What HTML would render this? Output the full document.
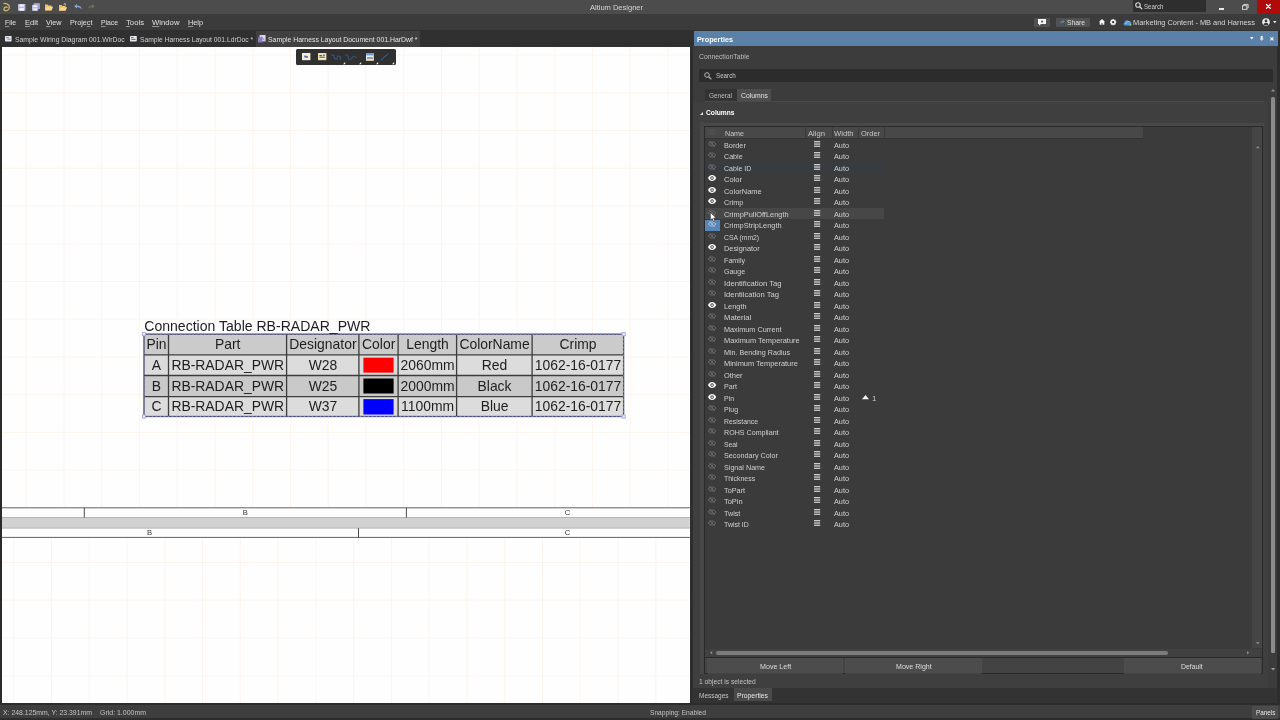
<!DOCTYPE html>
<html lang="en"><head><meta charset="utf-8"><title>Altium Designer</title>
<style>

html,body{margin:0;padding:0;}
body{width:1280px;height:720px;overflow:hidden;position:relative;background:#3b3b3b;font-family:"Liberation Sans",sans-serif;}
#root{position:absolute;left:0;top:0;width:1280px;height:720px;will-change:transform;}
.b{position:absolute;}
.t{position:absolute;white-space:pre;line-height:10px;height:10px;transform-origin:0 0;}
.t u{text-decoration:underline;text-underline-offset:0.6px;text-decoration-thickness:0.6px;text-decoration-color:rgba(224,224,224,0.55);}
svg{position:absolute;overflow:visible;}
.ct{position:absolute;white-space:pre;color:#1e1e1e;font-size:13.9px;line-height:16px;height:16px;text-align:center;}
.sl{position:absolute;white-space:pre;color:#333333;font-size:7.6px;line-height:8px;height:8px;width:10px;text-align:center;}

</style></head>
<body>
<div id="root">
<div class="b" style="left:0px;top:0px;width:1280.00px;height:13.80px;background:#4c4c4c;"></div>
<div class="b" style="left:0px;top:13.8px;width:1280.00px;height:16.20px;background:#3b3b3b;"></div>
<div class="b" style="left:0px;top:30px;width:1280.00px;height:16.50px;background:#303030;"></div>
<div class="b" style="left:1132.5px;top:0px;width:73.80px;height:11.60px;background:#2e2e2e;border-radius:0 0 1.5px 1.5px;"></div>
<div class="b" style="left:1257px;top:0px;width:23.00px;height:14.00px;background:#b00b0b;"></div>
<div class="b" style="left:1034px;top:18px;width:16.20px;height:8.60px;background:#515151;border-radius:1px;"></div>
<div class="b" style="left:1055.5px;top:18px;width:34.50px;height:8.60px;background:#515151;border-radius:1px;"></div>
<div class="b" style="left:256px;top:30.5px;width:164.00px;height:16.00px;background:#404040;"></div>
<div class="b" style="left:0px;top:46.5px;width:2.20px;height:656.50px;background:#2b2b2b;"></div>
<div class="b" style="left:690px;top:46.5px;width:2.70px;height:656.50px;background:#2e2e2e;"></div>
<div class="b" style="left:0px;top:702.5px;width:1280.00px;height:2.10px;background:#2c2c2c;"></div>
<div class="b" style="left:0px;top:704.6px;width:1280.00px;height:15.40px;background:#3e3e3e;"></div>
<div class="b" style="left:0px;top:718.4px;width:1280.00px;height:1.60px;background:#2c2c2c;"></div>
<div class="b" style="left:1252.5px;top:707.3px;width:24.70px;height:10.30px;background:#4b4b4b;box-shadow:0 0 0 0.6px #5a5a5a;"></div>
<div class="b" style="left:692.7px;top:46px;width:587.30px;height:642.00px;background:#3c3c3c;"></div>
<div class="b" style="left:1277.3px;top:30.5px;width:2.70px;height:672.50px;background:#2d2d2d;"></div>
<div class="b" style="left:694px;top:31px;width:583.60px;height:15.00px;background:#5c81a9;"></div>
<div class="b" style="left:698.7px;top:68.6px;width:574.30px;height:13.40px;background:#2c2c2c;border-radius:1.5px;"></div>
<div class="b" style="left:704.5px;top:88.7px;width:32.90px;height:12.70px;background:#333333;"></div>
<div class="b" style="left:737.4px;top:88.7px;width:33.90px;height:12.70px;background:#4e4e4e;"></div>
<div class="b" style="left:704.5px;top:101.4px;width:559.50px;height:0.80px;background:#4a4a4a;"></div>
<div class="b" style="left:692.7px;top:102.2px;width:575.30px;height:585.80px;background:#3f3f3f;"></div>
<div class="b" style="left:699.8px;top:121.5px;width:3.80px;height:552.10px;background:#474747;"></div>
<div class="b" style="left:703.6px;top:122.8px;width:560.20px;height:2.80px;background:#484848;"></div>
<div class="b" style="left:703.6px;top:125.6px;width:559.00px;height:548.40px;background:#2a2a2a;"></div>
<div class="b" style="left:704.6px;top:126.6px;width:557.40px;height:530.10px;background:#3b3b3b;"></div>
<div class="b" style="left:704.6px;top:126.6px;width:438.40px;height:11.40px;background:#484848;"></div>
<div class="b" style="left:804.6px;top:127px;width:0.80px;height:11.00px;background:#3a3a3a;"></div>
<div class="b" style="left:831.8px;top:127px;width:0.80px;height:11.00px;background:#3a3a3a;"></div>
<div class="b" style="left:858.4px;top:127px;width:0.80px;height:11.00px;background:#3a3a3a;"></div>
<div class="b" style="left:883.7px;top:127px;width:0.80px;height:11.00px;background:#3a3a3a;"></div>
<div class="b" style="left:704.6px;top:138px;width:438.40px;height:0.70px;background:#343434;"></div>
<div class="b" style="left:1252.2px;top:126.6px;width:9.80px;height:521.40px;background:#454545;"></div>
<div class="b" style="left:704.6px;top:162.4px;width:179.40px;height:11.20px;background:#383c41;"></div>
<div class="b" style="left:705.4px;top:208.4px;width:178.60px;height:11.00px;background:#474747;"></div>
<div class="b" style="left:705.4px;top:219.9px;width:14.60px;height:10.80px;background:#5885b8;"></div>
<div class="b" style="left:704.6px;top:648.5px;width:557.40px;height:8.20px;background:#414141;"></div>
<div class="b" style="left:716px;top:651px;width:451.50px;height:4.00px;background:#7c7c7c;border-radius:2px;"></div>
<div class="b" style="left:704.6px;top:657.8px;width:557.40px;height:15.60px;background:#434343;"></div>
<div class="b" style="left:707.5px;top:659.2px;width:134.30px;height:13.40px;background:#4c4c4c;box-shadow:0 0 0 0.6px #565656;"></div>
<div class="b" style="left:846.2px;top:659.2px;width:135.10px;height:13.40px;background:#4c4c4c;box-shadow:0 0 0 0.6px #565656;"></div>
<div class="b" style="left:1125px;top:659.2px;width:135.00px;height:13.40px;background:#4c4c4c;box-shadow:0 0 0 0.6px #565656;"></div>
<div class="b" style="left:1270.8px;top:96.5px;width:3.80px;height:556.00px;background:#8a8a8a;border-radius:1.5px;"></div>
<div class="b" style="left:692.7px;top:688px;width:584.60px;height:14.50px;background:#333333;"></div>
<div class="b" style="left:733.6px;top:688.2px;width:38.00px;height:13.00px;background:#4a4a4a;"></div>
<div class="b" style="left:2.2px;top:46.5px;width:687.80px;height:656.00px;background:#fefefe;overflow:hidden;">
<svg style="left:0;top:0" width="687.80" height="656.00" viewBox="2.2 46.5 687.80 656.00">
<line x1="26.40" y1="46" x2="26.40" y2="507" stroke="#fcf5ef" stroke-width="1"/>
<line x1="64.15" y1="46" x2="64.15" y2="507" stroke="#fcf5ef" stroke-width="1"/>
<line x1="101.90" y1="46" x2="101.90" y2="507" stroke="#fcf5ef" stroke-width="1"/>
<line x1="139.65" y1="46" x2="139.65" y2="507" stroke="#fcf5ef" stroke-width="1"/>
<line x1="177.40" y1="46" x2="177.40" y2="507" stroke="#fcf5ef" stroke-width="1"/>
<line x1="215.15" y1="46" x2="215.15" y2="507" stroke="#fcf5ef" stroke-width="1"/>
<line x1="252.90" y1="46" x2="252.90" y2="507" stroke="#fcf5ef" stroke-width="1"/>
<line x1="290.65" y1="46" x2="290.65" y2="507" stroke="#fcf5ef" stroke-width="1"/>
<line x1="328.40" y1="46" x2="328.40" y2="507" stroke="#fcf5ef" stroke-width="1"/>
<line x1="366.15" y1="46" x2="366.15" y2="507" stroke="#fcf5ef" stroke-width="1"/>
<line x1="403.90" y1="46" x2="403.90" y2="507" stroke="#fcf5ef" stroke-width="1"/>
<line x1="441.65" y1="46" x2="441.65" y2="507" stroke="#fcf5ef" stroke-width="1"/>
<line x1="479.40" y1="46" x2="479.40" y2="507" stroke="#fcf5ef" stroke-width="1"/>
<line x1="517.15" y1="46" x2="517.15" y2="507" stroke="#fcf5ef" stroke-width="1"/>
<line x1="554.90" y1="46" x2="554.90" y2="507" stroke="#fcf5ef" stroke-width="1"/>
<line x1="592.65" y1="46" x2="592.65" y2="507" stroke="#fcf5ef" stroke-width="1"/>
<line x1="630.40" y1="46" x2="630.40" y2="507" stroke="#fcf5ef" stroke-width="1"/>
<line x1="668.15" y1="46" x2="668.15" y2="507" stroke="#fcf5ef" stroke-width="1"/>
<line x1="2" y1="54.60" x2="690" y2="54.60" stroke="#fcf5ef" stroke-width="1"/>
<line x1="2" y1="92.33" x2="690" y2="92.33" stroke="#fcf5ef" stroke-width="1"/>
<line x1="2" y1="130.06" x2="690" y2="130.06" stroke="#fcf5ef" stroke-width="1"/>
<line x1="2" y1="167.79" x2="690" y2="167.79" stroke="#fcf5ef" stroke-width="1"/>
<line x1="2" y1="205.52" x2="690" y2="205.52" stroke="#fcf5ef" stroke-width="1"/>
<line x1="2" y1="243.25" x2="690" y2="243.25" stroke="#fcf5ef" stroke-width="1"/>
<line x1="2" y1="280.98" x2="690" y2="280.98" stroke="#fcf5ef" stroke-width="1"/>
<line x1="2" y1="318.71" x2="690" y2="318.71" stroke="#fcf5ef" stroke-width="1"/>
<line x1="2" y1="356.44" x2="690" y2="356.44" stroke="#fcf5ef" stroke-width="1"/>
<line x1="2" y1="394.17" x2="690" y2="394.17" stroke="#fcf5ef" stroke-width="1"/>
<line x1="2" y1="431.90" x2="690" y2="431.90" stroke="#fcf5ef" stroke-width="1"/>
<line x1="2" y1="469.63" x2="690" y2="469.63" stroke="#fcf5ef" stroke-width="1"/>
<line x1="13.90" y1="537" x2="13.90" y2="704" stroke="#fcf5ef" stroke-width="1"/>
<line x1="51.67" y1="537" x2="51.67" y2="704" stroke="#fcf5ef" stroke-width="1"/>
<line x1="89.44" y1="537" x2="89.44" y2="704" stroke="#fcf5ef" stroke-width="1"/>
<line x1="127.21" y1="537" x2="127.21" y2="704" stroke="#fcf5ef" stroke-width="1"/>
<line x1="164.98" y1="537" x2="164.98" y2="704" stroke="#fcf5ef" stroke-width="1"/>
<line x1="202.75" y1="537" x2="202.75" y2="704" stroke="#fcf5ef" stroke-width="1"/>
<line x1="240.52" y1="537" x2="240.52" y2="704" stroke="#fcf5ef" stroke-width="1"/>
<line x1="278.29" y1="537" x2="278.29" y2="704" stroke="#fcf5ef" stroke-width="1"/>
<line x1="316.06" y1="537" x2="316.06" y2="704" stroke="#fcf5ef" stroke-width="1"/>
<line x1="353.83" y1="537" x2="353.83" y2="704" stroke="#fcf5ef" stroke-width="1"/>
<line x1="391.60" y1="537" x2="391.60" y2="704" stroke="#fcf5ef" stroke-width="1"/>
<line x1="429.37" y1="537" x2="429.37" y2="704" stroke="#fcf5ef" stroke-width="1"/>
<line x1="467.14" y1="537" x2="467.14" y2="704" stroke="#fcf5ef" stroke-width="1"/>
<line x1="504.91" y1="537" x2="504.91" y2="704" stroke="#fcf5ef" stroke-width="1"/>
<line x1="542.68" y1="537" x2="542.68" y2="704" stroke="#fcf5ef" stroke-width="1"/>
<line x1="580.45" y1="537" x2="580.45" y2="704" stroke="#fcf5ef" stroke-width="1"/>
<line x1="618.22" y1="537" x2="618.22" y2="704" stroke="#fcf5ef" stroke-width="1"/>
<line x1="655.99" y1="537" x2="655.99" y2="704" stroke="#fcf5ef" stroke-width="1"/>
<line x1="2" y1="562" x2="690" y2="562" stroke="#fcf5ef" stroke-width="1"/>
<line x1="2" y1="599.7" x2="690" y2="599.7" stroke="#fcf5ef" stroke-width="1"/>
<line x1="2" y1="637.5" x2="690" y2="637.5" stroke="#fcf5ef" stroke-width="1"/>
<line x1="2" y1="675.3" x2="690" y2="675.3" stroke="#fcf5ef" stroke-width="1"/>
<rect x="2" y="507.3" width="688" height="29.6" fill="#ffffff"/>
<rect x="2" y="517" width="688" height="10.6" fill="#d2d2d2"/>
<line x1="2" y1="507.3" x2="690" y2="507.3" stroke="#5e5e5e" stroke-width="1"/>
<line x1="2" y1="517.0" x2="690" y2="517.0" stroke="#b4b4b4" stroke-width="1"/>
<line x1="2" y1="527.6" x2="690" y2="527.6" stroke="#b4b4b4" stroke-width="1"/>
<line x1="2" y1="536.9" x2="690" y2="536.9" stroke="#5e5e5e" stroke-width="1"/>
<line x1="84.5" y1="507.3" x2="84.5" y2="517" stroke="#4a4a4a" stroke-width="1"/>
<line x1="406.6" y1="507.3" x2="406.6" y2="517" stroke="#4a4a4a" stroke-width="1"/>
<line x1="358.7" y1="527.6" x2="358.7" y2="536.9" stroke="#4a4a4a" stroke-width="1"/>
<rect x="144.2" y="333.7" width="479.60" height="20.60" fill="#cbcbcb"/>
<rect x="144.2" y="354.3" width="479.60" height="20.70" fill="#dcdcdc"/>
<rect x="144.2" y="375.0" width="479.60" height="21.20" fill="#c9c9c9"/>
<rect x="144.2" y="396.2" width="479.60" height="19.80" fill="#dcdcdc"/>
<line x1="168.7" y1="333.7" x2="168.7" y2="416.0" stroke="#3c3c3c" stroke-width="1.3"/>
<line x1="286.8" y1="333.7" x2="286.8" y2="416.0" stroke="#3c3c3c" stroke-width="1.3"/>
<line x1="359.1" y1="333.7" x2="359.1" y2="416.0" stroke="#3c3c3c" stroke-width="1.3"/>
<line x1="398.3" y1="333.7" x2="398.3" y2="416.0" stroke="#3c3c3c" stroke-width="1.3"/>
<line x1="456.8" y1="333.7" x2="456.8" y2="416.0" stroke="#3c3c3c" stroke-width="1.3"/>
<line x1="532.3" y1="333.7" x2="532.3" y2="416.0" stroke="#3c3c3c" stroke-width="1.3"/>
<line x1="144.2" y1="354.3" x2="623.8" y2="354.3" stroke="#3c3c3c" stroke-width="1.3"/>
<line x1="144.2" y1="375.0" x2="623.8" y2="375.0" stroke="#3c3c3c" stroke-width="1.3"/>
<line x1="144.2" y1="396.2" x2="623.8" y2="396.2" stroke="#3c3c3c" stroke-width="1.3"/>
<rect x="144.2" y="333.7" width="479.60" height="82.30" fill="none" stroke="#4a4a5a" stroke-width="1.3"/>
<rect x="144.2" y="333.7" width="479.60" height="82.30" fill="none" stroke="#7d7dc8" stroke-width="1" stroke-dasharray="2 2"/>
<rect x="142.6" y="332.09999999999997" width="3.2" height="3.2" fill="#e8e8ff" stroke="#9aa0e0" stroke-width="0.8"/>
<rect x="622.1999999999999" y="332.09999999999997" width="3.2" height="3.2" fill="#e8e8ff" stroke="#9aa0e0" stroke-width="0.8"/>
<rect x="142.6" y="414.4" width="3.2" height="3.2" fill="#e8e8ff" stroke="#9aa0e0" stroke-width="0.8"/>
<rect x="622.1999999999999" y="414.4" width="3.2" height="3.2" fill="#e8e8ff" stroke="#9aa0e0" stroke-width="0.8"/>
<rect x="363.6" y="357.2" width="30.2" height="14.90" fill="#ff0000"/>
<rect x="363.6" y="378.0" width="30.2" height="15.00" fill="#000000"/>
<rect x="363.6" y="398.6" width="30.2" height="15.40" fill="#0000ff"/>
</svg>
<span class="ct" style="left:142.10px;top:271.50px;text-align:left;font-size:14.05px">Connection Table RB-RADAR_PWR</span>
<span class="ct" style="left:142.00px;width:24.50px;top:289.50px">Pin</span>
<span class="ct" style="left:166.50px;width:118.10px;top:289.50px">Part</span>
<span class="ct" style="left:284.60px;width:72.30px;top:289.50px">Designator</span>
<span class="ct" style="left:356.90px;width:39.20px;top:289.50px">Color</span>
<span class="ct" style="left:396.10px;width:58.50px;top:289.50px">Length</span>
<span class="ct" style="left:454.60px;width:75.50px;top:289.50px">ColorName</span>
<span class="ct" style="left:530.10px;width:91.50px;top:289.50px">Crimp</span>
<span class="ct" style="left:142.00px;width:24.50px;top:310.50px">A</span>
<span class="ct" style="left:166.50px;width:118.10px;top:310.50px">RB-RADAR_PWR</span>
<span class="ct" style="left:284.60px;width:72.30px;top:310.50px">W28</span>
<span class="ct" style="left:396.10px;width:58.50px;top:310.50px">2060mm</span>
<span class="ct" style="left:454.60px;width:75.50px;top:310.50px">Red</span>
<span class="ct" style="left:530.10px;width:91.50px;top:310.50px">1062-16-0177</span>
<span class="ct" style="left:142.00px;width:24.50px;top:331.50px">B</span>
<span class="ct" style="left:166.50px;width:118.10px;top:331.50px">RB-RADAR_PWR</span>
<span class="ct" style="left:284.60px;width:72.30px;top:331.50px">W25</span>
<span class="ct" style="left:396.10px;width:58.50px;top:331.50px">2000mm</span>
<span class="ct" style="left:454.60px;width:75.50px;top:331.50px">Black</span>
<span class="ct" style="left:530.10px;width:91.50px;top:331.50px">1062-16-0177</span>
<span class="ct" style="left:142.00px;width:24.50px;top:351.50px">C</span>
<span class="ct" style="left:166.50px;width:118.10px;top:351.50px">RB-RADAR_PWR</span>
<span class="ct" style="left:284.60px;width:72.30px;top:351.50px">W37</span>
<span class="ct" style="left:396.10px;width:58.50px;top:351.50px">1100mm</span>
<span class="ct" style="left:454.60px;width:75.50px;top:351.50px">Blue</span>
<span class="ct" style="left:530.10px;width:91.50px;top:351.50px">1062-16-0177</span>
<span class="sl" style="left:238.10px;top:462.50px">B</span>
<span class="sl" style="left:560.20px;top:462.50px">C</span>
<span class="sl" style="left:142.40px;top:482.50px">B</span>
<span class="sl" style="left:560.20px;top:482.50px">C</span>
<div class="b" style="left:293.60px;top:2.40px;width:100.6px;height:15.8px;background:#303030;border-radius:1.6px;"></div>
</div>
<svg style="left:3.4px;top:1.9px" width="7.2" height="9.5" viewBox="0 0 8 10.5"><path d="M1 1.4 L4 1.8 L6.8 3.9 L6.8 7.4 Q5.6 9.7 3 9.7 Q0.9 9.5 1 7.7 Q1.3 5.7 3.2 5.5 L4.7 5.9" fill="none" stroke="#cbb567" stroke-width="1.45" stroke-linecap="round" stroke-linejoin="round"/></svg>
<svg style="left:18px;top:3.6px" width="7.4" height="6.8" viewBox="0 0 7.4 6.8"><rect x="0" y="0" width="7.4" height="6.8" rx="0.6" fill="#b9b9dc"/><rect x="1.6" y="0.4" width="4.2" height="2.2" fill="#f2f2fa"/><rect x="1.4" y="4" width="4.6" height="2.8" fill="#eeeef8"/></svg>
<svg style="left:31.6px;top:2.8px" width="8" height="7.8" viewBox="0 0 8 7.8"><rect x="1.8" y="0" width="6.2" height="6" rx="0.5" fill="#9d9dc8"/><rect x="0" y="1.8" width="6.2" height="6" rx="0.5" fill="#bcbcdf"/><rect x="1.2" y="2.2" width="3.6" height="1.8" fill="#eeeef8"/><rect x="1.2" y="5.2" width="3.8" height="2.4" fill="#e6e6f4"/></svg>
<svg style="left:45.4px;top:4px" width="8" height="6.6" viewBox="0 0 8 6.6"><path d="M0 6.4 L0 0.6 L2.6 0.6 L3.4 1.6 L6.6 1.6 L6.6 2.8 L8 2.8 L6.6 6.4 Z" fill="#e9c46a"/><path d="M0.2 6.2 L1.6 3 L7.8 3 L6.4 6.2 Z" fill="#f3d78c"/></svg>
<svg style="left:59.2px;top:2.6px" width="8.2" height="8" viewBox="0 0 8.2 8"><path d="M0 7.8 L0 2 L2.6 2 L3.4 3 L6.6 3 L6.6 4.2 L8 4.2 L6.6 7.8 Z" fill="#e6c069"/><path d="M0.2 7.6 L1.6 4.4 L7.8 4.4 L6.4 7.6 Z" fill="#f1d791"/><path d="M4.6 1.8 L6.2 0.4 L6.4 2.4" fill="none" stroke="#ddd" stroke-width="0.8"/></svg>
<svg style="left:73.6px;top:4px" width="8" height="5.6" viewBox="0 0 8 5.6"><path d="M0.2 2.2 L3 0 L3 1.4 C6 1.4 7.6 3 7.6 5.4 C6.6 3.8 5.2 3.2 3 3.2 L3 4.6 Z" fill="#7fa7dc"/></svg>
<svg style="left:87.8px;top:4px" width="7" height="5.2" viewBox="0 0 7 5.2"><path d="M6.8 2.2 L4 0 L4 1.4 C1.6 1.4 0.2 3 0.2 5 C1.2 3.6 2.2 3.2 4 3.2 L4 4.6 Z" fill="#6c6c6c"/></svg>
<svg style="left:1134.6px;top:2.3px" width="7.4" height="7.4" viewBox="0 0 7.4 7.4"><circle cx="3" cy="3" r="2.25" fill="none" stroke="#d4d4d4" stroke-width="1.15"/><path d="M4.7 4.7 L6.8 6.8" stroke="#d4d4d4" stroke-width="1.3" stroke-linecap="round"/></svg>
<div class="b" style="left:1219.2px;top:8.1px;width:4.60px;height:1.50px;background:#e8e8e8;"></div>
<svg style="left:1241.6px;top:3.9px" width="6.6" height="5.8" viewBox="0 0 6.6 5.8"><rect x="0.45" y="1.75" width="4.4" height="3.6" fill="none" stroke="#dedede" stroke-width="0.9"/><path d="M1.7 1.75 L1.7 0.45 L6.15 0.45 L6.15 4 L4.85 4" fill="none" stroke="#dedede" stroke-width="0.9"/></svg>
<svg style="left:1265.7px;top:4.3px" width="4.8" height="4.8" viewBox="0 0 4.8 4.8"><path d="M0.5 0.5 L4.3 4.3 M4.3 0.5 L0.5 4.3" stroke="#ffffff" stroke-width="1.3" stroke-linecap="round"/></svg>
<svg style="left:1037.9px;top:19.3px" width="8" height="6.5" viewBox="0 0 8 6.5"><path d="M0 0 H8 V5 H3 L1 6.5 V5 H0 Z" fill="#f6f6f6"/><rect x="3.1" y="1.7" width="2" height="1.7" fill="#555555"/></svg>
<svg style="left:1059.6px;top:20.4px" width="4.8" height="4" viewBox="0 0 4.8 4"><path d="M4.8 1.6 L2.7 0 L2.7 1 C1 1 0.1 2.1 0 3.8 C0.7 2.8 1.4 2.4 2.7 2.4 L2.7 3.3 Z" fill="#5585c6"/></svg>
<svg style="left:1098.5px;top:19.2px" width="6" height="5.8" viewBox="0 0 6 5.8"><path d="M3 0 L6 2.8 H5.3 V5.8 H3.5 V4 H2.5 V5.8 H0.7 V2.8 H0 Z" fill="#f4f4f4"/></svg>
<svg style="left:1109.7px;top:19.2px" width="6.3" height="6.3" viewBox="0 0 6.3 6.3"><circle cx="3.15" cy="3.15" r="1.9" fill="none" stroke="#f2f2f2" stroke-width="1.5"/><g stroke="#f2f2f2" stroke-width="1.15"><path d="M3.15 0 V1.2 M3.15 5.1 V6.3 M0 3.15 H1.2 M5.1 3.15 H6.3 M0.95 0.95 L1.75 1.75 M4.55 4.55 L5.35 5.35 M5.35 0.95 L4.55 1.75 M0.95 5.35 L1.75 4.55"/></g></svg>
<svg style="left:1122.6px;top:18.6px" width="9" height="7" viewBox="0 0 9 7"><path d="M2 6.4 C0.4 6.4 0 4.2 1.6 3.6 C1.6 1.4 4.6 0.4 5.8 2.4 C7.8 2 9 3.8 8.2 5.4 C8 6 7.4 6.4 6.8 6.4 Z" fill="#5596dc"/><path d="M2.2 5 C3.4 3 5.2 2.2 6.6 2.6" fill="none" stroke="#a9d0f4" stroke-width="0.9"/><circle cx="7.4" cy="5.8" r="0.95" fill="#9ccc5a"/></svg>
<svg style="left:1262px;top:18.2px" width="8" height="8" viewBox="0 0 8 8"><circle cx="4" cy="4" r="3.8" fill="#efefef"/><circle cx="4" cy="3" r="1.4" fill="#3b3b3b"/><path d="M1.4 6.4 C2 4.6 6 4.6 6.6 6.4 C5.4 7.6 2.6 7.6 1.4 6.4 Z" fill="#3b3b3b"/></svg>
<svg style="left:1272.6px;top:21.2px" width="3.6" height="2.2" viewBox="0 0 3.6 2.2"><path d="M0 0 H3.6 L1.8 2.2 Z" fill="#e8e8e8"/></svg>
<svg style="left:5px;top:36px" width="6.6" height="5.4" viewBox="0 0 6.6 5.4"><rect x="0" y="0" width="6.6" height="5.4" rx="0.6" fill="#e4e8f2"/><path d="M1 1.6 H4 M2.4 3.2 H5.4" stroke="#6a7aa8" stroke-width="0.9"/></svg>
<svg style="left:130.2px;top:36px" width="6.8" height="5.4" viewBox="0 0 6.8 5.4"><rect x="0" y="0" width="6.8" height="5.4" rx="0.6" fill="#e8e8ee"/><path d="M1 1.6 H3.6 M1.4 3.4 H5.6" stroke="#555" stroke-width="0.9"/></svg>
<svg style="left:258.2px;top:34.6px" width="7.8" height="7.6" viewBox="0 0 7.8 7.6"><rect x="1.6" y="0" width="6" height="6.4" fill="#d9d3ee"/><rect x="0" y="2.4" width="4.4" height="5" fill="#8f7cc0"/><path d="M3 1.6 L6.4 5" stroke="#6a5aa0" stroke-width="0.8"/></svg>
<svg style="left:1249.5px;top:37.3px" width="3.6" height="2.6" viewBox="0 0 3.6 2.6"><path d="M0 0 H3.6 L1.8 2.6 Z" fill="#f4f4f4"/></svg>
<svg style="left:1259.5px;top:36.1px" width="3.4" height="4.8" viewBox="0 0 3.4 4.8"><rect x="0.7" y="0" width="2" height="3" fill="#f0f0f0"/><rect x="0" y="2.8" width="3.4" height="0.8" fill="#f0f0f0"/><rect x="1.4" y="3.4" width="0.7" height="1.4" fill="#f0f0f0"/></svg>
<svg style="left:1269.5px;top:36.8px" width="3.8" height="3.8" viewBox="0 0 3.8 3.8"><path d="M0.4 0.4 L3.4 3.4 M3.4 0.4 L0.4 3.4" stroke="#f8f8f8" stroke-width="1.15"/></svg>
<svg style="left:703.6px;top:72.1px" width="7.6" height="7.6" viewBox="0 0 7.6 7.6"><circle cx="3" cy="3" r="2.3" fill="none" stroke="#bcbcbc" stroke-width="0.95"/><path d="M4.8 4.8 L7 7" stroke="#bcbcbc" stroke-width="1.1" stroke-linecap="round"/></svg>
<svg style="left:699.6px;top:111.6px" width="3" height="3" viewBox="0 0 3 3"><path d="M3 0 V3 H0 Z" fill="#e8e8e8"/></svg>
<svg style="left:1270.6px;top:89.4px" width="4.2" height="2.4" viewBox="0 0 4.2 2.4"><path d="M0 2.4 L2.1 0 L4.2 2.4 Z" fill="#8e8e8e"/></svg>
<svg style="left:1270.6px;top:667.6px" width="4.2" height="2.4" viewBox="0 0 4.2 2.4"><path d="M0 0 H4.2 L2.1 2.4 Z" fill="#9a9a9a"/></svg>
<svg style="left:1255.8px;top:146px" width="3.6" height="2.2" viewBox="0 0 3.6 2.2"><path d="M0 2.2 L1.8 0 L3.6 2.2 Z" fill="#8e8e8e"/></svg>
<svg style="left:1255.8px;top:642px" width="3.6" height="2.2" viewBox="0 0 3.6 2.2"><path d="M0 0 H3.6 L1.8 2.2 Z" fill="#8e8e8e"/></svg>
<svg style="left:709.6px;top:651.4px" width="2.2" height="3.4" viewBox="0 0 2.2 3.4"><path d="M2.2 0 V3.4 L0 1.7 Z" fill="#8e8e8e"/></svg>
<svg style="left:1246.6px;top:651.4px" width="2.2" height="3.4" viewBox="0 0 2.2 3.4"><path d="M0 0 V3.4 L2.2 1.7 Z" fill="#8e8e8e"/></svg>
<svg style="left:708.1px;top:140.6px" width="8.2" height="6" viewBox="0 0 8.2 6"><path d="M0.4 3 C2 0.2 6.2 0.2 7.8 3 C6.2 5.8 2 5.8 0.4 3 Z" fill="none" stroke="#6b6b6b" stroke-width="1"/><circle cx="4.1" cy="3" r="1" fill="#6b6b6b"/><path d="M1.4 0.2 L6.8 5.8" stroke="#6b6b6b" stroke-width="1"/></svg>
<svg style="left:813.8px;top:140.9px" width="6.2" height="6" viewBox="0 0 6.2 6"><path d="M0 0.5 H6.2 M0 2.15 H6.2 M0 3.8 H6.2 M0 5.45 H6.2" stroke="#cdcdcd" stroke-width="1"/></svg>
<svg style="left:708.1px;top:152.1px" width="8.2" height="6" viewBox="0 0 8.2 6"><path d="M0.4 3 C2 0.2 6.2 0.2 7.8 3 C6.2 5.8 2 5.8 0.4 3 Z" fill="none" stroke="#6b6b6b" stroke-width="1"/><circle cx="4.1" cy="3" r="1" fill="#6b6b6b"/><path d="M1.4 0.2 L6.8 5.8" stroke="#6b6b6b" stroke-width="1"/></svg>
<svg style="left:813.8px;top:152.4px" width="6.2" height="6" viewBox="0 0 6.2 6"><path d="M0 0.5 H6.2 M0 2.15 H6.2 M0 3.8 H6.2 M0 5.45 H6.2" stroke="#cdcdcd" stroke-width="1"/></svg>
<svg style="left:708.1px;top:163.6px" width="8.2" height="6" viewBox="0 0 8.2 6"><path d="M0.4 3 C2 0.2 6.2 0.2 7.8 3 C6.2 5.8 2 5.8 0.4 3 Z" fill="none" stroke="#6b6b6b" stroke-width="1"/><circle cx="4.1" cy="3" r="1" fill="#6b6b6b"/><path d="M1.4 0.2 L6.8 5.8" stroke="#6b6b6b" stroke-width="1"/></svg>
<svg style="left:813.8px;top:163.9px" width="6.2" height="6" viewBox="0 0 6.2 6"><path d="M0 0.5 H6.2 M0 2.15 H6.2 M0 3.8 H6.2 M0 5.45 H6.2" stroke="#cdcdcd" stroke-width="1"/></svg>
<svg style="left:708.3px;top:175.0px" width="8.2" height="6.2" viewBox="0 0 8.2 6.2"><path d="M0 3.1 C1.6 -0.9 6.6 -0.9 8.2 3.1 C6.6 7.1 1.6 7.1 0 3.1 Z" fill="#ffffff"/><circle cx="4.1" cy="3.1" r="1.8" fill="#3c3c3c"/><circle cx="4.1" cy="3.1" r="0.85" fill="#ffffff"/></svg>
<svg style="left:813.8px;top:175.4px" width="6.2" height="6" viewBox="0 0 6.2 6"><path d="M0 0.5 H6.2 M0 2.15 H6.2 M0 3.8 H6.2 M0 5.45 H6.2" stroke="#cdcdcd" stroke-width="1"/></svg>
<svg style="left:708.3px;top:186.5px" width="8.2" height="6.2" viewBox="0 0 8.2 6.2"><path d="M0 3.1 C1.6 -0.9 6.6 -0.9 8.2 3.1 C6.6 7.1 1.6 7.1 0 3.1 Z" fill="#ffffff"/><circle cx="4.1" cy="3.1" r="1.8" fill="#3c3c3c"/><circle cx="4.1" cy="3.1" r="0.85" fill="#ffffff"/></svg>
<svg style="left:813.8px;top:186.9px" width="6.2" height="6" viewBox="0 0 6.2 6"><path d="M0 0.5 H6.2 M0 2.15 H6.2 M0 3.8 H6.2 M0 5.45 H6.2" stroke="#cdcdcd" stroke-width="1"/></svg>
<svg style="left:708.3px;top:198.0px" width="8.2" height="6.2" viewBox="0 0 8.2 6.2"><path d="M0 3.1 C1.6 -0.9 6.6 -0.9 8.2 3.1 C6.6 7.1 1.6 7.1 0 3.1 Z" fill="#ffffff"/><circle cx="4.1" cy="3.1" r="1.8" fill="#3c3c3c"/><circle cx="4.1" cy="3.1" r="0.85" fill="#ffffff"/></svg>
<svg style="left:813.8px;top:198.4px" width="6.2" height="6" viewBox="0 0 6.2 6"><path d="M0 0.5 H6.2 M0 2.15 H6.2 M0 3.8 H6.2 M0 5.45 H6.2" stroke="#cdcdcd" stroke-width="1"/></svg>
<svg style="left:708.1px;top:209.6px" width="8.2" height="6" viewBox="0 0 8.2 6"><path d="M0.4 3 C2 0.2 6.2 0.2 7.8 3 C6.2 5.8 2 5.8 0.4 3 Z" fill="none" stroke="#6b6b6b" stroke-width="1"/><circle cx="4.1" cy="3" r="1" fill="#6b6b6b"/><path d="M1.4 0.2 L6.8 5.8" stroke="#6b6b6b" stroke-width="1"/></svg>
<svg style="left:813.8px;top:209.9px" width="6.2" height="6" viewBox="0 0 6.2 6"><path d="M0 0.5 H6.2 M0 2.15 H6.2 M0 3.8 H6.2 M0 5.45 H6.2" stroke="#cdcdcd" stroke-width="1"/></svg>
<svg style="left:708.1px;top:221.1px" width="8.2" height="6" viewBox="0 0 8.2 6"><path d="M0.4 3 C2 0.2 6.2 0.2 7.8 3 C6.2 5.8 2 5.8 0.4 3 Z" fill="none" stroke="#a9c2e0" stroke-width="1"/><circle cx="4.1" cy="3" r="1" fill="#a9c2e0"/><path d="M1.4 0.2 L6.8 5.8" stroke="#a9c2e0" stroke-width="1"/></svg>
<svg style="left:813.8px;top:221.4px" width="6.2" height="6" viewBox="0 0 6.2 6"><path d="M0 0.5 H6.2 M0 2.15 H6.2 M0 3.8 H6.2 M0 5.45 H6.2" stroke="#cdcdcd" stroke-width="1"/></svg>
<svg style="left:708.1px;top:232.6px" width="8.2" height="6" viewBox="0 0 8.2 6"><path d="M0.4 3 C2 0.2 6.2 0.2 7.8 3 C6.2 5.8 2 5.8 0.4 3 Z" fill="none" stroke="#6b6b6b" stroke-width="1"/><circle cx="4.1" cy="3" r="1" fill="#6b6b6b"/><path d="M1.4 0.2 L6.8 5.8" stroke="#6b6b6b" stroke-width="1"/></svg>
<svg style="left:813.8px;top:232.9px" width="6.2" height="6" viewBox="0 0 6.2 6"><path d="M0 0.5 H6.2 M0 2.15 H6.2 M0 3.8 H6.2 M0 5.45 H6.2" stroke="#cdcdcd" stroke-width="1"/></svg>
<svg style="left:708.3px;top:244.0px" width="8.2" height="6.2" viewBox="0 0 8.2 6.2"><path d="M0 3.1 C1.6 -0.9 6.6 -0.9 8.2 3.1 C6.6 7.1 1.6 7.1 0 3.1 Z" fill="#ffffff"/><circle cx="4.1" cy="3.1" r="1.8" fill="#3c3c3c"/><circle cx="4.1" cy="3.1" r="0.85" fill="#ffffff"/></svg>
<svg style="left:813.8px;top:244.4px" width="6.2" height="6" viewBox="0 0 6.2 6"><path d="M0 0.5 H6.2 M0 2.15 H6.2 M0 3.8 H6.2 M0 5.45 H6.2" stroke="#cdcdcd" stroke-width="1"/></svg>
<svg style="left:708.1px;top:255.6px" width="8.2" height="6" viewBox="0 0 8.2 6"><path d="M0.4 3 C2 0.2 6.2 0.2 7.8 3 C6.2 5.8 2 5.8 0.4 3 Z" fill="none" stroke="#6b6b6b" stroke-width="1"/><circle cx="4.1" cy="3" r="1" fill="#6b6b6b"/><path d="M1.4 0.2 L6.8 5.8" stroke="#6b6b6b" stroke-width="1"/></svg>
<svg style="left:813.8px;top:255.9px" width="6.2" height="6" viewBox="0 0 6.2 6"><path d="M0 0.5 H6.2 M0 2.15 H6.2 M0 3.8 H6.2 M0 5.45 H6.2" stroke="#cdcdcd" stroke-width="1"/></svg>
<svg style="left:708.1px;top:267.1px" width="8.2" height="6" viewBox="0 0 8.2 6"><path d="M0.4 3 C2 0.2 6.2 0.2 7.8 3 C6.2 5.8 2 5.8 0.4 3 Z" fill="none" stroke="#6b6b6b" stroke-width="1"/><circle cx="4.1" cy="3" r="1" fill="#6b6b6b"/><path d="M1.4 0.2 L6.8 5.8" stroke="#6b6b6b" stroke-width="1"/></svg>
<svg style="left:813.8px;top:267.4px" width="6.2" height="6" viewBox="0 0 6.2 6"><path d="M0 0.5 H6.2 M0 2.15 H6.2 M0 3.8 H6.2 M0 5.45 H6.2" stroke="#cdcdcd" stroke-width="1"/></svg>
<svg style="left:708.1px;top:278.6px" width="8.2" height="6" viewBox="0 0 8.2 6"><path d="M0.4 3 C2 0.2 6.2 0.2 7.8 3 C6.2 5.8 2 5.8 0.4 3 Z" fill="none" stroke="#6b6b6b" stroke-width="1"/><circle cx="4.1" cy="3" r="1" fill="#6b6b6b"/><path d="M1.4 0.2 L6.8 5.8" stroke="#6b6b6b" stroke-width="1"/></svg>
<svg style="left:813.8px;top:278.9px" width="6.2" height="6" viewBox="0 0 6.2 6"><path d="M0 0.5 H6.2 M0 2.15 H6.2 M0 3.8 H6.2 M0 5.45 H6.2" stroke="#cdcdcd" stroke-width="1"/></svg>
<svg style="left:708.1px;top:290.1px" width="8.2" height="6" viewBox="0 0 8.2 6"><path d="M0.4 3 C2 0.2 6.2 0.2 7.8 3 C6.2 5.8 2 5.8 0.4 3 Z" fill="none" stroke="#6b6b6b" stroke-width="1"/><circle cx="4.1" cy="3" r="1" fill="#6b6b6b"/><path d="M1.4 0.2 L6.8 5.8" stroke="#6b6b6b" stroke-width="1"/></svg>
<svg style="left:813.8px;top:290.4px" width="6.2" height="6" viewBox="0 0 6.2 6"><path d="M0 0.5 H6.2 M0 2.15 H6.2 M0 3.8 H6.2 M0 5.45 H6.2" stroke="#cdcdcd" stroke-width="1"/></svg>
<svg style="left:708.3px;top:301.5px" width="8.2" height="6.2" viewBox="0 0 8.2 6.2"><path d="M0 3.1 C1.6 -0.9 6.6 -0.9 8.2 3.1 C6.6 7.1 1.6 7.1 0 3.1 Z" fill="#ffffff"/><circle cx="4.1" cy="3.1" r="1.8" fill="#3c3c3c"/><circle cx="4.1" cy="3.1" r="0.85" fill="#ffffff"/></svg>
<svg style="left:813.8px;top:301.9px" width="6.2" height="6" viewBox="0 0 6.2 6"><path d="M0 0.5 H6.2 M0 2.15 H6.2 M0 3.8 H6.2 M0 5.45 H6.2" stroke="#cdcdcd" stroke-width="1"/></svg>
<svg style="left:708.1px;top:313.1px" width="8.2" height="6" viewBox="0 0 8.2 6"><path d="M0.4 3 C2 0.2 6.2 0.2 7.8 3 C6.2 5.8 2 5.8 0.4 3 Z" fill="none" stroke="#6b6b6b" stroke-width="1"/><circle cx="4.1" cy="3" r="1" fill="#6b6b6b"/><path d="M1.4 0.2 L6.8 5.8" stroke="#6b6b6b" stroke-width="1"/></svg>
<svg style="left:813.8px;top:313.4px" width="6.2" height="6" viewBox="0 0 6.2 6"><path d="M0 0.5 H6.2 M0 2.15 H6.2 M0 3.8 H6.2 M0 5.45 H6.2" stroke="#cdcdcd" stroke-width="1"/></svg>
<svg style="left:708.1px;top:324.6px" width="8.2" height="6" viewBox="0 0 8.2 6"><path d="M0.4 3 C2 0.2 6.2 0.2 7.8 3 C6.2 5.8 2 5.8 0.4 3 Z" fill="none" stroke="#6b6b6b" stroke-width="1"/><circle cx="4.1" cy="3" r="1" fill="#6b6b6b"/><path d="M1.4 0.2 L6.8 5.8" stroke="#6b6b6b" stroke-width="1"/></svg>
<svg style="left:813.8px;top:324.9px" width="6.2" height="6" viewBox="0 0 6.2 6"><path d="M0 0.5 H6.2 M0 2.15 H6.2 M0 3.8 H6.2 M0 5.45 H6.2" stroke="#cdcdcd" stroke-width="1"/></svg>
<svg style="left:708.1px;top:336.1px" width="8.2" height="6" viewBox="0 0 8.2 6"><path d="M0.4 3 C2 0.2 6.2 0.2 7.8 3 C6.2 5.8 2 5.8 0.4 3 Z" fill="none" stroke="#6b6b6b" stroke-width="1"/><circle cx="4.1" cy="3" r="1" fill="#6b6b6b"/><path d="M1.4 0.2 L6.8 5.8" stroke="#6b6b6b" stroke-width="1"/></svg>
<svg style="left:813.8px;top:336.4px" width="6.2" height="6" viewBox="0 0 6.2 6"><path d="M0 0.5 H6.2 M0 2.15 H6.2 M0 3.8 H6.2 M0 5.45 H6.2" stroke="#cdcdcd" stroke-width="1"/></svg>
<svg style="left:708.1px;top:347.6px" width="8.2" height="6" viewBox="0 0 8.2 6"><path d="M0.4 3 C2 0.2 6.2 0.2 7.8 3 C6.2 5.8 2 5.8 0.4 3 Z" fill="none" stroke="#6b6b6b" stroke-width="1"/><circle cx="4.1" cy="3" r="1" fill="#6b6b6b"/><path d="M1.4 0.2 L6.8 5.8" stroke="#6b6b6b" stroke-width="1"/></svg>
<svg style="left:813.8px;top:347.9px" width="6.2" height="6" viewBox="0 0 6.2 6"><path d="M0 0.5 H6.2 M0 2.15 H6.2 M0 3.8 H6.2 M0 5.45 H6.2" stroke="#cdcdcd" stroke-width="1"/></svg>
<svg style="left:708.1px;top:359.1px" width="8.2" height="6" viewBox="0 0 8.2 6"><path d="M0.4 3 C2 0.2 6.2 0.2 7.8 3 C6.2 5.8 2 5.8 0.4 3 Z" fill="none" stroke="#6b6b6b" stroke-width="1"/><circle cx="4.1" cy="3" r="1" fill="#6b6b6b"/><path d="M1.4 0.2 L6.8 5.8" stroke="#6b6b6b" stroke-width="1"/></svg>
<svg style="left:813.8px;top:359.4px" width="6.2" height="6" viewBox="0 0 6.2 6"><path d="M0 0.5 H6.2 M0 2.15 H6.2 M0 3.8 H6.2 M0 5.45 H6.2" stroke="#cdcdcd" stroke-width="1"/></svg>
<svg style="left:708.1px;top:370.6px" width="8.2" height="6" viewBox="0 0 8.2 6"><path d="M0.4 3 C2 0.2 6.2 0.2 7.8 3 C6.2 5.8 2 5.8 0.4 3 Z" fill="none" stroke="#6b6b6b" stroke-width="1"/><circle cx="4.1" cy="3" r="1" fill="#6b6b6b"/><path d="M1.4 0.2 L6.8 5.8" stroke="#6b6b6b" stroke-width="1"/></svg>
<svg style="left:813.8px;top:370.9px" width="6.2" height="6" viewBox="0 0 6.2 6"><path d="M0 0.5 H6.2 M0 2.15 H6.2 M0 3.8 H6.2 M0 5.45 H6.2" stroke="#cdcdcd" stroke-width="1"/></svg>
<svg style="left:708.3px;top:382.0px" width="8.2" height="6.2" viewBox="0 0 8.2 6.2"><path d="M0 3.1 C1.6 -0.9 6.6 -0.9 8.2 3.1 C6.6 7.1 1.6 7.1 0 3.1 Z" fill="#ffffff"/><circle cx="4.1" cy="3.1" r="1.8" fill="#3c3c3c"/><circle cx="4.1" cy="3.1" r="0.85" fill="#ffffff"/></svg>
<svg style="left:813.8px;top:382.4px" width="6.2" height="6" viewBox="0 0 6.2 6"><path d="M0 0.5 H6.2 M0 2.15 H6.2 M0 3.8 H6.2 M0 5.45 H6.2" stroke="#cdcdcd" stroke-width="1"/></svg>
<svg style="left:708.3px;top:393.5px" width="8.2" height="6.2" viewBox="0 0 8.2 6.2"><path d="M0 3.1 C1.6 -0.9 6.6 -0.9 8.2 3.1 C6.6 7.1 1.6 7.1 0 3.1 Z" fill="#ffffff"/><circle cx="4.1" cy="3.1" r="1.8" fill="#3c3c3c"/><circle cx="4.1" cy="3.1" r="0.85" fill="#ffffff"/></svg>
<svg style="left:813.8px;top:393.9px" width="6.2" height="6" viewBox="0 0 6.2 6"><path d="M0 0.5 H6.2 M0 2.15 H6.2 M0 3.8 H6.2 M0 5.45 H6.2" stroke="#cdcdcd" stroke-width="1"/></svg>
<svg style="left:708.1px;top:405.1px" width="8.2" height="6" viewBox="0 0 8.2 6"><path d="M0.4 3 C2 0.2 6.2 0.2 7.8 3 C6.2 5.8 2 5.8 0.4 3 Z" fill="none" stroke="#6b6b6b" stroke-width="1"/><circle cx="4.1" cy="3" r="1" fill="#6b6b6b"/><path d="M1.4 0.2 L6.8 5.8" stroke="#6b6b6b" stroke-width="1"/></svg>
<svg style="left:813.8px;top:405.4px" width="6.2" height="6" viewBox="0 0 6.2 6"><path d="M0 0.5 H6.2 M0 2.15 H6.2 M0 3.8 H6.2 M0 5.45 H6.2" stroke="#cdcdcd" stroke-width="1"/></svg>
<svg style="left:708.1px;top:416.6px" width="8.2" height="6" viewBox="0 0 8.2 6"><path d="M0.4 3 C2 0.2 6.2 0.2 7.8 3 C6.2 5.8 2 5.8 0.4 3 Z" fill="none" stroke="#6b6b6b" stroke-width="1"/><circle cx="4.1" cy="3" r="1" fill="#6b6b6b"/><path d="M1.4 0.2 L6.8 5.8" stroke="#6b6b6b" stroke-width="1"/></svg>
<svg style="left:813.8px;top:416.9px" width="6.2" height="6" viewBox="0 0 6.2 6"><path d="M0 0.5 H6.2 M0 2.15 H6.2 M0 3.8 H6.2 M0 5.45 H6.2" stroke="#cdcdcd" stroke-width="1"/></svg>
<svg style="left:708.1px;top:428.1px" width="8.2" height="6" viewBox="0 0 8.2 6"><path d="M0.4 3 C2 0.2 6.2 0.2 7.8 3 C6.2 5.8 2 5.8 0.4 3 Z" fill="none" stroke="#6b6b6b" stroke-width="1"/><circle cx="4.1" cy="3" r="1" fill="#6b6b6b"/><path d="M1.4 0.2 L6.8 5.8" stroke="#6b6b6b" stroke-width="1"/></svg>
<svg style="left:813.8px;top:428.4px" width="6.2" height="6" viewBox="0 0 6.2 6"><path d="M0 0.5 H6.2 M0 2.15 H6.2 M0 3.8 H6.2 M0 5.45 H6.2" stroke="#cdcdcd" stroke-width="1"/></svg>
<svg style="left:708.1px;top:439.6px" width="8.2" height="6" viewBox="0 0 8.2 6"><path d="M0.4 3 C2 0.2 6.2 0.2 7.8 3 C6.2 5.8 2 5.8 0.4 3 Z" fill="none" stroke="#6b6b6b" stroke-width="1"/><circle cx="4.1" cy="3" r="1" fill="#6b6b6b"/><path d="M1.4 0.2 L6.8 5.8" stroke="#6b6b6b" stroke-width="1"/></svg>
<svg style="left:813.8px;top:439.9px" width="6.2" height="6" viewBox="0 0 6.2 6"><path d="M0 0.5 H6.2 M0 2.15 H6.2 M0 3.8 H6.2 M0 5.45 H6.2" stroke="#cdcdcd" stroke-width="1"/></svg>
<svg style="left:708.1px;top:451.1px" width="8.2" height="6" viewBox="0 0 8.2 6"><path d="M0.4 3 C2 0.2 6.2 0.2 7.8 3 C6.2 5.8 2 5.8 0.4 3 Z" fill="none" stroke="#6b6b6b" stroke-width="1"/><circle cx="4.1" cy="3" r="1" fill="#6b6b6b"/><path d="M1.4 0.2 L6.8 5.8" stroke="#6b6b6b" stroke-width="1"/></svg>
<svg style="left:813.8px;top:451.4px" width="6.2" height="6" viewBox="0 0 6.2 6"><path d="M0 0.5 H6.2 M0 2.15 H6.2 M0 3.8 H6.2 M0 5.45 H6.2" stroke="#cdcdcd" stroke-width="1"/></svg>
<svg style="left:708.1px;top:462.6px" width="8.2" height="6" viewBox="0 0 8.2 6"><path d="M0.4 3 C2 0.2 6.2 0.2 7.8 3 C6.2 5.8 2 5.8 0.4 3 Z" fill="none" stroke="#6b6b6b" stroke-width="1"/><circle cx="4.1" cy="3" r="1" fill="#6b6b6b"/><path d="M1.4 0.2 L6.8 5.8" stroke="#6b6b6b" stroke-width="1"/></svg>
<svg style="left:813.8px;top:462.9px" width="6.2" height="6" viewBox="0 0 6.2 6"><path d="M0 0.5 H6.2 M0 2.15 H6.2 M0 3.8 H6.2 M0 5.45 H6.2" stroke="#cdcdcd" stroke-width="1"/></svg>
<svg style="left:708.1px;top:474.1px" width="8.2" height="6" viewBox="0 0 8.2 6"><path d="M0.4 3 C2 0.2 6.2 0.2 7.8 3 C6.2 5.8 2 5.8 0.4 3 Z" fill="none" stroke="#6b6b6b" stroke-width="1"/><circle cx="4.1" cy="3" r="1" fill="#6b6b6b"/><path d="M1.4 0.2 L6.8 5.8" stroke="#6b6b6b" stroke-width="1"/></svg>
<svg style="left:813.8px;top:474.4px" width="6.2" height="6" viewBox="0 0 6.2 6"><path d="M0 0.5 H6.2 M0 2.15 H6.2 M0 3.8 H6.2 M0 5.45 H6.2" stroke="#cdcdcd" stroke-width="1"/></svg>
<svg style="left:708.1px;top:485.6px" width="8.2" height="6" viewBox="0 0 8.2 6"><path d="M0.4 3 C2 0.2 6.2 0.2 7.8 3 C6.2 5.8 2 5.8 0.4 3 Z" fill="none" stroke="#6b6b6b" stroke-width="1"/><circle cx="4.1" cy="3" r="1" fill="#6b6b6b"/><path d="M1.4 0.2 L6.8 5.8" stroke="#6b6b6b" stroke-width="1"/></svg>
<svg style="left:813.8px;top:485.9px" width="6.2" height="6" viewBox="0 0 6.2 6"><path d="M0 0.5 H6.2 M0 2.15 H6.2 M0 3.8 H6.2 M0 5.45 H6.2" stroke="#cdcdcd" stroke-width="1"/></svg>
<svg style="left:708.1px;top:497.1px" width="8.2" height="6" viewBox="0 0 8.2 6"><path d="M0.4 3 C2 0.2 6.2 0.2 7.8 3 C6.2 5.8 2 5.8 0.4 3 Z" fill="none" stroke="#6b6b6b" stroke-width="1"/><circle cx="4.1" cy="3" r="1" fill="#6b6b6b"/><path d="M1.4 0.2 L6.8 5.8" stroke="#6b6b6b" stroke-width="1"/></svg>
<svg style="left:813.8px;top:497.4px" width="6.2" height="6" viewBox="0 0 6.2 6"><path d="M0 0.5 H6.2 M0 2.15 H6.2 M0 3.8 H6.2 M0 5.45 H6.2" stroke="#cdcdcd" stroke-width="1"/></svg>
<svg style="left:708.1px;top:508.6px" width="8.2" height="6" viewBox="0 0 8.2 6"><path d="M0.4 3 C2 0.2 6.2 0.2 7.8 3 C6.2 5.8 2 5.8 0.4 3 Z" fill="none" stroke="#6b6b6b" stroke-width="1"/><circle cx="4.1" cy="3" r="1" fill="#6b6b6b"/><path d="M1.4 0.2 L6.8 5.8" stroke="#6b6b6b" stroke-width="1"/></svg>
<svg style="left:813.8px;top:508.9px" width="6.2" height="6" viewBox="0 0 6.2 6"><path d="M0 0.5 H6.2 M0 2.15 H6.2 M0 3.8 H6.2 M0 5.45 H6.2" stroke="#cdcdcd" stroke-width="1"/></svg>
<svg style="left:708.1px;top:520.1px" width="8.2" height="6" viewBox="0 0 8.2 6"><path d="M0.4 3 C2 0.2 6.2 0.2 7.8 3 C6.2 5.8 2 5.8 0.4 3 Z" fill="none" stroke="#6b6b6b" stroke-width="1"/><circle cx="4.1" cy="3" r="1" fill="#6b6b6b"/><path d="M1.4 0.2 L6.8 5.8" stroke="#6b6b6b" stroke-width="1"/></svg>
<svg style="left:813.8px;top:520.4px" width="6.2" height="6" viewBox="0 0 6.2 6"><path d="M0 0.5 H6.2 M0 2.15 H6.2 M0 3.8 H6.2 M0 5.45 H6.2" stroke="#cdcdcd" stroke-width="1"/></svg>
<svg style="left:708.1px;top:128.6px" width="8.2" height="6" viewBox="0 0 8.2 6"><path d="M0.4 3 C2 0.2 6.2 0.2 7.8 3 C6.2 5.8 2 5.8 0.4 3 Z" fill="none" stroke="#545454" stroke-width="1"/><circle cx="4.1" cy="3" r="1" fill="#545454"/><path d="M1.4 0.2 L6.8 5.8" stroke="#545454" stroke-width="1"/></svg>
<svg style="left:862px;top:395.4px" width="7" height="4.2" viewBox="0 0 7 4.2"><path d="M0 4.2 L3.5 0 L7 4.2 Z" fill="#f2f2f2"/></svg>
<svg style="left:709.6px;top:212.2px" width="6.6" height="10.2" viewBox="0 0 6.6 10.2"><path d="M0.4 0.4 V8.2 L2.3 6.5 L3.6 9.6 L4.9 9 L3.6 6 L6.1 6 Z" fill="#ffffff" stroke="#222" stroke-width="0.5"/></svg>
<svg style="left:301.8px;top:53px" width="8.4" height="7.2" viewBox="0 0 8.4 7.2"><rect x="0" y="0" width="8.4" height="7.2" fill="#f1eedc"/><path d="M2 2.4 L5.8 3 L5.8 5 L2.4 4.6 Z" fill="#5d6fb0"/></svg>
<svg style="left:317.8px;top:53px" width="8.4" height="7.2" viewBox="0 0 8.4 7.2"><rect x="0" y="0" width="8.4" height="7.2" fill="#f0dca0"/><rect x="0.9" y="1.2" width="6.6" height="4.8" fill="#f6f0d8"/><path d="M1.4 2.6 H4 M4.8 2.2 H7 M1.4 4.2 H6.8" stroke="#444" stroke-width="1"/></svg>
<svg style="left:330.6px;top:52.6px" width="11" height="8" viewBox="0 0 11 8"><path d="M0.4 2 L3 2.6 L3.4 5.6 L6 6.4 L6.6 3 L9.4 3.6 L9.6 7" fill="none" stroke="#3a4d70" stroke-width="1.3"/></svg>
<svg style="left:345.4px;top:52.6px" width="12" height="8" viewBox="0 0 12 8"><path d="M0.4 2.6 C2.4 0.6 3.6 3 3.4 5 C3.4 7.4 5.8 6.6 7 4.8 C8.2 3 10.4 3 11.6 4.8" fill="none" stroke="#36506f" stroke-width="1.2"/></svg>
<svg style="left:365.8px;top:53px" width="7.8" height="7.6" viewBox="0 0 7.8 7.6"><rect x="0" y="0" width="7.8" height="7.6" fill="#e9eef6"/><rect x="0" y="0" width="7.8" height="2.4" fill="#6f9ad4"/><path d="M1 5 H6.8" stroke="#444" stroke-width="1"/><rect x="0" y="6.4" width="7.8" height="1.2" fill="#e8dca8"/></svg>
<svg style="left:380.4px;top:53px" width="9" height="8" viewBox="0 0 9 8"><path d="M0.6 7.4 L8.4 0.6" stroke="#365a86" stroke-width="1.2"/></svg>
<svg style="left:343.2px;top:62px" width="2.2" height="2.2" viewBox="0 0 2.2 2.2"><path d="M2.2 0 V2.2 H0 Z" fill="#f2f2f2"/></svg>
<svg style="left:359.4px;top:62px" width="2.2" height="2.2" viewBox="0 0 2.2 2.2"><path d="M2.2 0 V2.2 H0 Z" fill="#f2f2f2"/></svg>
<svg style="left:375.6px;top:62px" width="2.2" height="2.2" viewBox="0 0 2.2 2.2"><path d="M2.2 0 V2.2 H0 Z" fill="#f2f2f2"/></svg>
<svg style="left:391.6px;top:62px" width="2.2" height="2.2" viewBox="0 0 2.2 2.2"><path d="M2.2 0 V2.2 H0 Z" fill="#f2f2f2"/></svg>
<span class="t" style="left:590.00px;top:3px;font-size:8px;color:#d6d6d6;transform:scaleX(0.9386);">Altium Designer</span>
<span class="t" style="left:1143.50px;top:2px;font-size:7.2px;color:#d2d2d2;transform:scaleX(0.8560);">Search</span>
<span class="t" style="left:5.00px;top:18px;font-size:8px;color:#e0e0e0;transform:scaleX(0.8523);"><u>F</u>ile</span>
<span class="t" style="left:24.50px;top:18px;font-size:8px;color:#e0e0e0;transform:scaleX(0.9422);"><u>E</u>dit</span>
<span class="t" style="left:45.50px;top:18px;font-size:8px;color:#e0e0e0;transform:scaleX(0.9002);"><u>V</u>iew</span>
<span class="t" style="left:70.00px;top:18px;font-size:8px;color:#e0e0e0;transform:scaleX(0.9028);">Proje<u>c</u>t</span>
<span class="t" style="left:100.50px;top:18px;font-size:8px;color:#e0e0e0;transform:scaleX(0.8487);"><u>P</u>lace</span>
<span class="t" style="left:126.00px;top:18px;font-size:8px;color:#e0e0e0;transform:scaleX(0.9632);"><u>T</u>ools</span>
<span class="t" style="left:152.00px;top:18px;font-size:8px;color:#e0e0e0;transform:scaleX(0.9660);"><u>W</u>indow</span>
<span class="t" style="left:188.00px;top:18px;font-size:8px;color:#e0e0e0;transform:scaleX(0.9108);"><u>H</u>elp</span>
<span class="t" style="left:1067.00px;top:18px;font-size:8px;color:#e0e0e0;transform:scaleX(0.8427);">Share</span>
<span class="t" style="left:1133.00px;top:18px;font-size:8px;color:#d8d8d8;transform:scaleX(0.9238);">Marketing Content - MB and Harness</span>
<span class="t" style="left:14.50px;top:35px;font-size:7.4px;color:#cfcfcf;transform:scaleX(0.9246);">Sample Wiring Diagram 001.WirDoc</span>
<span class="t" style="left:139.80px;top:35px;font-size:7.4px;color:#cfcfcf;transform:scaleX(0.9123);">Sample Harness Layout 001.LdrDoc *</span>
<span class="t" style="left:268.00px;top:35px;font-size:7.4px;color:#e4e4e4;transform:scaleX(0.9307);">Sample Harness Layout Document 001.HarDwf *</span>
<span class="t" style="left:697.00px;top:35px;font-size:8px;color:#ffffff;font-weight:700;transform:scaleX(0.9096);">Properties</span>
<span class="t" style="left:699.00px;top:52px;font-size:8px;color:#bdbdbd;transform:scaleX(0.8472);">ConnectionTable</span>
<span class="t" style="left:715.50px;top:71px;font-size:7.2px;color:#cacaca;transform:scaleX(0.8647);">Search</span>
<span class="t" style="left:709.00px;top:91px;font-size:8px;color:#bdbdbd;transform:scaleX(0.8079);">General</span>
<span class="t" style="left:740.50px;top:91px;font-size:8px;color:#e2e2e2;transform:scaleX(0.8550);">Columns</span>
<span class="t" style="left:705.50px;top:108px;font-size:8px;color:#ffffff;font-weight:700;transform:scaleX(0.8325);">Columns</span>
<span class="t" style="left:724.50px;top:129px;font-size:8px;color:#c6c6c6;transform:scaleX(0.8902);">Name</span>
<span class="t" style="left:808.00px;top:129px;font-size:8px;color:#c6c6c6;transform:scaleX(0.9552);">Align</span>
<span class="t" style="left:834.00px;top:129px;font-size:8px;color:#c6c6c6;transform:scaleX(0.9534);">Width</span>
<span class="t" style="left:861.00px;top:129px;font-size:8px;color:#c6c6c6;transform:scaleX(0.9290);">Order</span>
<span class="t" style="left:724.40px;top:141px;font-size:8px;color:#d0d0d0;transform:scaleX(0.9098);">Border</span>
<span class="t" style="left:834.00px;top:141px;font-size:8px;color:#d0d0d0;transform:scaleX(0.9108);">Auto</span>
<span class="t" style="left:724.40px;top:152px;font-size:8px;color:#d0d0d0;transform:scaleX(0.8897);">Cable</span>
<span class="t" style="left:834.00px;top:152px;font-size:8px;color:#d0d0d0;transform:scaleX(0.9108);">Auto</span>
<span class="t" style="left:724.40px;top:164px;font-size:8px;color:#d0d0d0;transform:scaleX(0.8787);">Cable ID</span>
<span class="t" style="left:834.00px;top:164px;font-size:8px;color:#d0d0d0;transform:scaleX(0.9108);">Auto</span>
<span class="t" style="left:724.40px;top:175px;font-size:8px;color:#d0d0d0;transform:scaleX(0.9464);">Color</span>
<span class="t" style="left:834.00px;top:175px;font-size:8px;color:#d0d0d0;transform:scaleX(0.9108);">Auto</span>
<span class="t" style="left:724.40px;top:187px;font-size:8px;color:#d0d0d0;transform:scaleX(0.9291);">ColorName</span>
<span class="t" style="left:834.00px;top:187px;font-size:8px;color:#d0d0d0;transform:scaleX(0.9108);">Auto</span>
<span class="t" style="left:724.40px;top:198px;font-size:8px;color:#d0d0d0;transform:scaleX(0.9066);">Crimp</span>
<span class="t" style="left:834.00px;top:198px;font-size:8px;color:#d0d0d0;transform:scaleX(0.9108);">Auto</span>
<span class="t" style="left:724.40px;top:210px;font-size:8px;color:#d0d0d0;transform:scaleX(0.9272);">CrimpPullOffLength</span>
<span class="t" style="left:834.00px;top:210px;font-size:8px;color:#d0d0d0;transform:scaleX(0.9108);">Auto</span>
<span class="t" style="left:724.40px;top:221px;font-size:8px;color:#d0d0d0;transform:scaleX(0.9253);">CrimpStripLength</span>
<span class="t" style="left:834.00px;top:221px;font-size:8px;color:#d0d0d0;transform:scaleX(0.9108);">Auto</span>
<span class="t" style="left:724.40px;top:233px;font-size:8px;color:#d0d0d0;transform:scaleX(0.8490);">CSA (mm2)</span>
<span class="t" style="left:834.00px;top:233px;font-size:8px;color:#d0d0d0;transform:scaleX(0.9108);">Auto</span>
<span class="t" style="left:724.40px;top:244px;font-size:8px;color:#d0d0d0;transform:scaleX(0.9202);">Designator</span>
<span class="t" style="left:834.00px;top:244px;font-size:8px;color:#d0d0d0;transform:scaleX(0.9108);">Auto</span>
<span class="t" style="left:724.40px;top:256px;font-size:8px;color:#d0d0d0;transform:scaleX(0.8955);">Family</span>
<span class="t" style="left:834.00px;top:256px;font-size:8px;color:#d0d0d0;transform:scaleX(0.9108);">Auto</span>
<span class="t" style="left:724.40px;top:267px;font-size:8px;color:#d0d0d0;transform:scaleX(0.8780);">Gauge</span>
<span class="t" style="left:834.00px;top:267px;font-size:8px;color:#d0d0d0;transform:scaleX(0.9108);">Auto</span>
<span class="t" style="left:724.40px;top:279px;font-size:8px;color:#d0d0d0;transform:scaleX(0.9615);">Identification Tag</span>
<span class="t" style="left:834.00px;top:279px;font-size:8px;color:#d0d0d0;transform:scaleX(0.9108);">Auto</span>
<span class="t" style="left:724.40px;top:290px;font-size:8px;color:#d0d0d0;transform:scaleX(0.9554);">Identiication Tag</span>
<span class="t" style="left:834.00px;top:290px;font-size:8px;color:#d0d0d0;transform:scaleX(0.9108);">Auto</span>
<span class="t" style="left:724.40px;top:302px;font-size:8px;color:#d0d0d0;transform:scaleX(0.9236);">Length</span>
<span class="t" style="left:834.00px;top:302px;font-size:8px;color:#d0d0d0;transform:scaleX(0.9108);">Auto</span>
<span class="t" style="left:724.40px;top:313px;font-size:8px;color:#d0d0d0;transform:scaleX(0.9612);">Material</span>
<span class="t" style="left:834.00px;top:313px;font-size:8px;color:#d0d0d0;transform:scaleX(0.9108);">Auto</span>
<span class="t" style="left:724.40px;top:325px;font-size:8px;color:#d0d0d0;transform:scaleX(0.9060);">Maximum Current</span>
<span class="t" style="left:834.00px;top:325px;font-size:8px;color:#d0d0d0;transform:scaleX(0.9108);">Auto</span>
<span class="t" style="left:724.40px;top:336px;font-size:8px;color:#d0d0d0;transform:scaleX(0.9258);">Maximum Temperature</span>
<span class="t" style="left:834.00px;top:336px;font-size:8px;color:#d0d0d0;transform:scaleX(0.9108);">Auto</span>
<span class="t" style="left:724.40px;top:348px;font-size:8px;color:#d0d0d0;transform:scaleX(0.8953);">Min. Bending Radius</span>
<span class="t" style="left:834.00px;top:348px;font-size:8px;color:#d0d0d0;transform:scaleX(0.9108);">Auto</span>
<span class="t" style="left:724.40px;top:359px;font-size:8px;color:#d0d0d0;transform:scaleX(0.9297);">Minimum Temperature</span>
<span class="t" style="left:834.00px;top:359px;font-size:8px;color:#d0d0d0;transform:scaleX(0.9108);">Auto</span>
<span class="t" style="left:724.40px;top:371px;font-size:8px;color:#d0d0d0;transform:scaleX(0.9293);">Other</span>
<span class="t" style="left:834.00px;top:371px;font-size:8px;color:#d0d0d0;transform:scaleX(0.9108);">Auto</span>
<span class="t" style="left:724.40px;top:382px;font-size:8px;color:#d0d0d0;transform:scaleX(0.8929);">Part</span>
<span class="t" style="left:834.00px;top:382px;font-size:8px;color:#d0d0d0;transform:scaleX(0.9108);">Auto</span>
<span class="t" style="left:724.40px;top:394px;font-size:8px;color:#d0d0d0;transform:scaleX(0.8735);">Pin</span>
<span class="t" style="left:834.00px;top:394px;font-size:8px;color:#d0d0d0;transform:scaleX(0.9108);">Auto</span>
<span class="t" style="left:724.40px;top:405px;font-size:8px;color:#d0d0d0;transform:scaleX(0.8804);">Plug</span>
<span class="t" style="left:834.00px;top:405px;font-size:8px;color:#d0d0d0;transform:scaleX(0.9108);">Auto</span>
<span class="t" style="left:724.40px;top:417px;font-size:8px;color:#d0d0d0;transform:scaleX(0.8616);">Resistance</span>
<span class="t" style="left:834.00px;top:417px;font-size:8px;color:#d0d0d0;transform:scaleX(0.9108);">Auto</span>
<span class="t" style="left:724.40px;top:428px;font-size:8px;color:#d0d0d0;transform:scaleX(0.8898);">ROHS Compliant</span>
<span class="t" style="left:834.00px;top:428px;font-size:8px;color:#d0d0d0;transform:scaleX(0.9108);">Auto</span>
<span class="t" style="left:724.40px;top:440px;font-size:8px;color:#d0d0d0;transform:scaleX(0.8492);">Seal</span>
<span class="t" style="left:834.00px;top:440px;font-size:8px;color:#d0d0d0;transform:scaleX(0.9108);">Auto</span>
<span class="t" style="left:724.40px;top:451px;font-size:8px;color:#d0d0d0;transform:scaleX(0.9036);">Secondary Color</span>
<span class="t" style="left:834.00px;top:451px;font-size:8px;color:#d0d0d0;transform:scaleX(0.9108);">Auto</span>
<span class="t" style="left:724.40px;top:463px;font-size:8px;color:#d0d0d0;transform:scaleX(0.8971);">Signal Name</span>
<span class="t" style="left:834.00px;top:463px;font-size:8px;color:#d0d0d0;transform:scaleX(0.9108);">Auto</span>
<span class="t" style="left:724.40px;top:474px;font-size:8px;color:#d0d0d0;transform:scaleX(0.8635);">Thickness</span>
<span class="t" style="left:834.00px;top:474px;font-size:8px;color:#d0d0d0;transform:scaleX(0.9108);">Auto</span>
<span class="t" style="left:724.40px;top:486px;font-size:8px;color:#d0d0d0;transform:scaleX(0.9124);">ToPart</span>
<span class="t" style="left:834.00px;top:486px;font-size:8px;color:#d0d0d0;transform:scaleX(0.9108);">Auto</span>
<span class="t" style="left:724.40px;top:497px;font-size:8px;color:#d0d0d0;transform:scaleX(0.9293);">ToPin</span>
<span class="t" style="left:834.00px;top:497px;font-size:8px;color:#d0d0d0;transform:scaleX(0.9108);">Auto</span>
<span class="t" style="left:724.40px;top:509px;font-size:8px;color:#d0d0d0;transform:scaleX(0.8967);">Twist</span>
<span class="t" style="left:834.00px;top:509px;font-size:8px;color:#d0d0d0;transform:scaleX(0.9108);">Auto</span>
<span class="t" style="left:724.40px;top:520px;font-size:8px;color:#d0d0d0;transform:scaleX(0.8734);">Twist ID</span>
<span class="t" style="left:834.00px;top:520px;font-size:8px;color:#d0d0d0;transform:scaleX(0.9108);">Auto</span>
<span class="t" style="left:872.00px;top:394px;font-size:8px;color:#c9c9c9;">1</span>
<span class="t" style="left:759.50px;top:662px;font-size:8px;color:#dedede;transform:scaleX(0.8893);">Move Left</span>
<span class="t" style="left:895.75px;top:662px;font-size:8px;color:#dedede;transform:scaleX(0.8834);">Move Right</span>
<span class="t" style="left:1181.25px;top:662px;font-size:8px;color:#dedede;transform:scaleX(0.8577);">Default</span>
<span class="t" style="left:699.25px;top:677px;font-size:7.4px;color:#c4c4c4;transform:scaleX(0.9028);">1 object is selected</span>
<span class="t" style="left:698.50px;top:691px;font-size:7.6px;color:#c4c4c4;transform:scaleX(0.8520);">Messages</span>
<span class="t" style="left:737.00px;top:691px;font-size:7.6px;color:#e6e6e6;transform:scaleX(0.8953);">Properties</span>
<span class="t" style="left:3.00px;top:708px;font-size:7.4px;color:#c4c4c4;transform:scaleX(0.9310);">X: 248.125mm, Y: 23.391mm</span>
<span class="t" style="left:100.00px;top:708px;font-size:7.4px;color:#c4c4c4;transform:scaleX(0.9409);">Grid: 1.000mm</span>
<span class="t" style="left:650.00px;top:708px;font-size:7.4px;color:#c4c4c4;transform:scaleX(0.8964);">Snapping: Enabled</span>
<span class="t" style="left:1255.50px;top:708px;font-size:7.4px;color:#e6e6e6;transform:scaleX(0.8625);">Panels</span>
</div>
</body></html>
